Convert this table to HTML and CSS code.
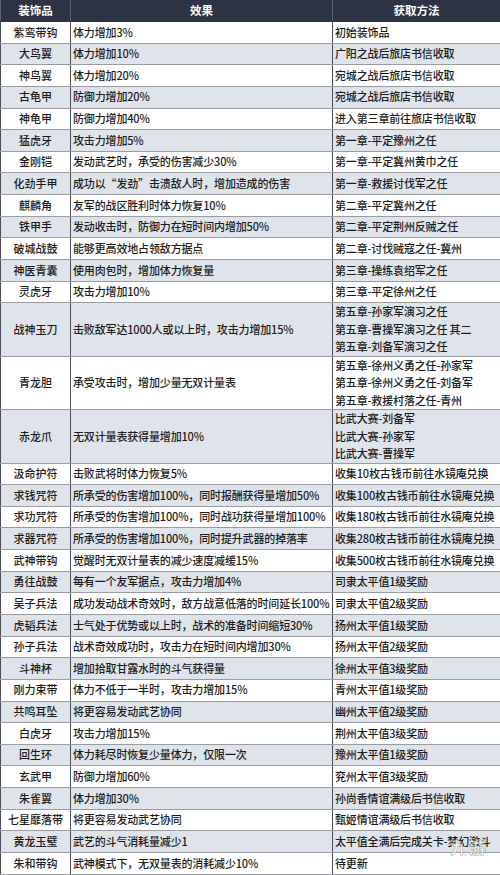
FILE: index.html
```html
<!DOCTYPE html>
<html lang="zh-CN">
<head>
<meta charset="utf-8">
<title>装饰品一览</title>
<link rel="stylesheet" href="styles.css">
</head>
<body>
<div class="tbl">
  <div class="row head"><div class="c c1">装饰品</div><div class="c c2">效果</div><div class="c c3">获取方法</div></div>
  <div class="row"><div class="c c1">紫鸾带钩</div><div class="c c2">体力增加3%</div><div class="c c3">初始装饰品</div></div>
  <div class="row alt"><div class="c c1">大鸟翼</div><div class="c c2">体力增加10%</div><div class="c c3">广阳之战后旅店书信收取</div></div>
  <div class="row"><div class="c c1">神鸟翼</div><div class="c c2">体力增加20%</div><div class="c c3">宛城之战后旅店书信收取</div></div>
  <div class="row alt"><div class="c c1">古龟甲</div><div class="c c2">防御力增加20%</div><div class="c c3">宛城之战后旅店书信收取</div></div>
  <div class="row"><div class="c c1">神龟甲</div><div class="c c2">防御力增加40%</div><div class="c c3">进入第三章前往旅店书信收取</div></div>
  <div class="row alt"><div class="c c1">猛虎牙</div><div class="c c2">攻击力增加5%</div><div class="c c3">第一章-平定豫州之任</div></div>
  <div class="row"><div class="c c1">金刚铠</div><div class="c c2">发动武艺时，承受的伤害减少30%</div><div class="c c3">第一章-平定冀州黄巾之任</div></div>
  <div class="row alt"><div class="c c1">化劲手甲</div><div class="c c2">成功以“发劲”击溃敌人时，增加造成的伤害</div><div class="c c3">第一章-救援讨伐军之任</div></div>
  <div class="row"><div class="c c1">麒麟角</div><div class="c c2">友军的战区胜利时体力恢复10%</div><div class="c c3">第二章-平定冀州之任</div></div>
  <div class="row alt"><div class="c c1">铁甲手</div><div class="c c2">发动收击时，防御力在短时间内增加50%</div><div class="c c3">第二章-平定荆州反贼之任</div></div>
  <div class="row"><div class="c c1">破城战鼓</div><div class="c c2">能够更高效地占领敌方据点</div><div class="c c3">第二章-讨伐贼寇之任-冀州</div></div>
  <div class="row alt"><div class="c c1">神医青囊</div><div class="c c2">使用肉包时，增加体力恢复量</div><div class="c c3">第三章-操练袁绍军之任</div></div>
  <div class="row"><div class="c c1">灵虎牙</div><div class="c c2">攻击力增加10%</div><div class="c c3">第三章-平定徐州之任</div></div>
  <div class="row tall alt"><div class="c c1">战神玉刀</div><div class="c c2">击败敌军达1000人或以上时，攻击力增加15%</div><div class="c c3">第五章-孙家军演习之任<br>第五章-曹操军演习之任 其二<br>第五章-刘备军演习之任</div></div>
  <div class="row tall"><div class="c c1">青龙胆</div><div class="c c2">承受攻击时，增加少量无双计量表</div><div class="c c3">第五章-徐州义勇之任-孙家军<br>第五章-徐州义勇之任-刘备军<br>第五章-救援村落之任-青州</div></div>
  <div class="row tall alt"><div class="c c1">赤龙爪</div><div class="c c2">无双计量表获得量增加10%</div><div class="c c3">比武大赛-刘备军<br>比武大赛-孙家军<br>比武大赛-曹操军</div></div>
  <div class="row"><div class="c c1">汲命护符</div><div class="c c2">击败武将时体力恢复5%</div><div class="c c3">收集10枚古钱币前往水镜庵兑换</div></div>
  <div class="row alt"><div class="c c1">求钱咒符</div><div class="c c2">所承受的伤害增加100%，同时报酬获得量增加50%</div><div class="c c3">收集100枚古钱币前往水镜庵兑换</div></div>
  <div class="row"><div class="c c1">求功咒符</div><div class="c c2">所承受的伤害增加100%，同时战功获得量增加100%</div><div class="c c3">收集180枚古钱币前往水镜庵兑换</div></div>
  <div class="row alt"><div class="c c1">求器咒符</div><div class="c c2">所承受的伤害增加100%，同时提升武器的掉落率</div><div class="c c3">收集280枚古钱币前往水镜庵兑换</div></div>
  <div class="row"><div class="c c1">武神带钩</div><div class="c c2">觉醒时无双计量表的减少速度减缓15%</div><div class="c c3">收集500枚古钱币前往水镜庵兑换</div></div>
  <div class="row alt"><div class="c c1">勇往战鼓</div><div class="c c2">每有一个友军据点，攻击力增加4%</div><div class="c c3">司隶太平值1级奖励</div></div>
  <div class="row"><div class="c c1">吴子兵法</div><div class="c c2">成功发动战术奇效时，敌方战意低落的时间延长100%</div><div class="c c3">司隶太平值2级奖励</div></div>
  <div class="row alt"><div class="c c1">虎韬兵法</div><div class="c c2">士气处于优势或以上时，战术的准备时间缩短30%</div><div class="c c3">扬州太平值1级奖励</div></div>
  <div class="row"><div class="c c1">孙子兵法</div><div class="c c2">战术奇效成功时，攻击力在短时间内增加30%</div><div class="c c3">扬州太平值2级奖励</div></div>
  <div class="row alt"><div class="c c1">斗神杯</div><div class="c c2">增加拾取甘露水时的斗气获得量</div><div class="c c3">徐州太平值3级奖励</div></div>
  <div class="row"><div class="c c1">刚力束带</div><div class="c c2">体力不低于一半时，攻击力增加15%</div><div class="c c3">青州太平值1级奖励</div></div>
  <div class="row alt"><div class="c c1">共鸣耳坠</div><div class="c c2">将更容易发动武艺协同</div><div class="c c3">幽州太平值2级奖励</div></div>
  <div class="row"><div class="c c1">白虎牙</div><div class="c c2">攻击力增加15%</div><div class="c c3">荆州太平值3级奖励</div></div>
  <div class="row alt"><div class="c c1">回生环</div><div class="c c2">体力耗尽时恢复少量体力，仅限一次</div><div class="c c3">豫州太平值1级奖励</div></div>
  <div class="row"><div class="c c1">玄武甲</div><div class="c c2">防御力增加60%</div><div class="c c3">兖州太平值3级奖励</div></div>
  <div class="row alt"><div class="c c1">朱雀翼</div><div class="c c2">体力增加30%</div><div class="c c3">孙尚香情谊满级后书信收取</div></div>
  <div class="row"><div class="c c1">七星靡落带</div><div class="c c2">将更容易发动武艺协同</div><div class="c c3">甄姬情谊满级后书信收取</div></div>
  <div class="row alt"><div class="c c1">黄龙玉璧</div><div class="c c2">武艺的斗气消耗量减少1</div><div class="c c3">太平值全满后完成关卡-梦幻激斗</div></div>
  <div class="row"><div class="c c1">朱和带钩</div><div class="c c2">武神模式下，无双量表的消耗减少10%</div><div class="c c3">待更新</div></div>
  <div class="wm">九游</div>
</div>
</body>
</html>
```

FILE: styles.css
```css
html, body {
  margin: 0;
  padding: 0;
  background: #ffffff;
}

body {
  width: 500px;
  height: 875px;
  overflow: hidden;
  font-family: "Noto Sans CJK SC", "Noto Sans", sans-serif;
  font-size: 11px;
  font-weight: 500;
  color: #1c1c1c;
}

.tbl {
  position: relative;
  width: 500px;
}

.row {
  display: grid;
  grid-template-columns: 71px 262px 167px;
  height: 21.65px;
  box-sizing: border-box;
  border-bottom: 1px solid #9a9ca2;
  background: #ffffff;
}

.row.alt {
  background: #dfe3ea;
}

.row.tall {
  height: 53.4px;
}

.row.head {
  height: 22px;
  background: #2d3343;
  border-bottom: 1px solid #2d3343;
  color: #ffffff;
  font-weight: 700;
  font-size: 11.5px;
}

.c {
  display: flex;
  align-items: center;
  box-sizing: border-box;
  line-height: 17.5px;
  white-space: nowrap;
  overflow: hidden;
}

.c1 {
  justify-content: center;
  border-right: 1px solid #4a4d55;
  border-left: 1px solid #4a4d55;
}

.c2 {
  padding-left: 2px;
  border-right: 1px solid #4a4d55;
  letter-spacing: -0.15px;
}

.c3 {
  padding-left: 2px;
  letter-spacing: -0.15px;
}

.head .c2,
.head .c3 {
  justify-content: center;
  padding-left: 0;
  letter-spacing: 0;
}

.head .c1,
.head .c2 {
  border-color: #5a6070;
}

.wm {
  position: absolute;
  right: 12px;
  bottom: 16px;
  font-size: 17px;
  font-weight: 700;
  color: rgba(255, 255, 255, 0.75);
  -webkit-text-stroke: 0.6px rgba(120, 120, 120, 0.6);
  letter-spacing: 2px;
}
```
